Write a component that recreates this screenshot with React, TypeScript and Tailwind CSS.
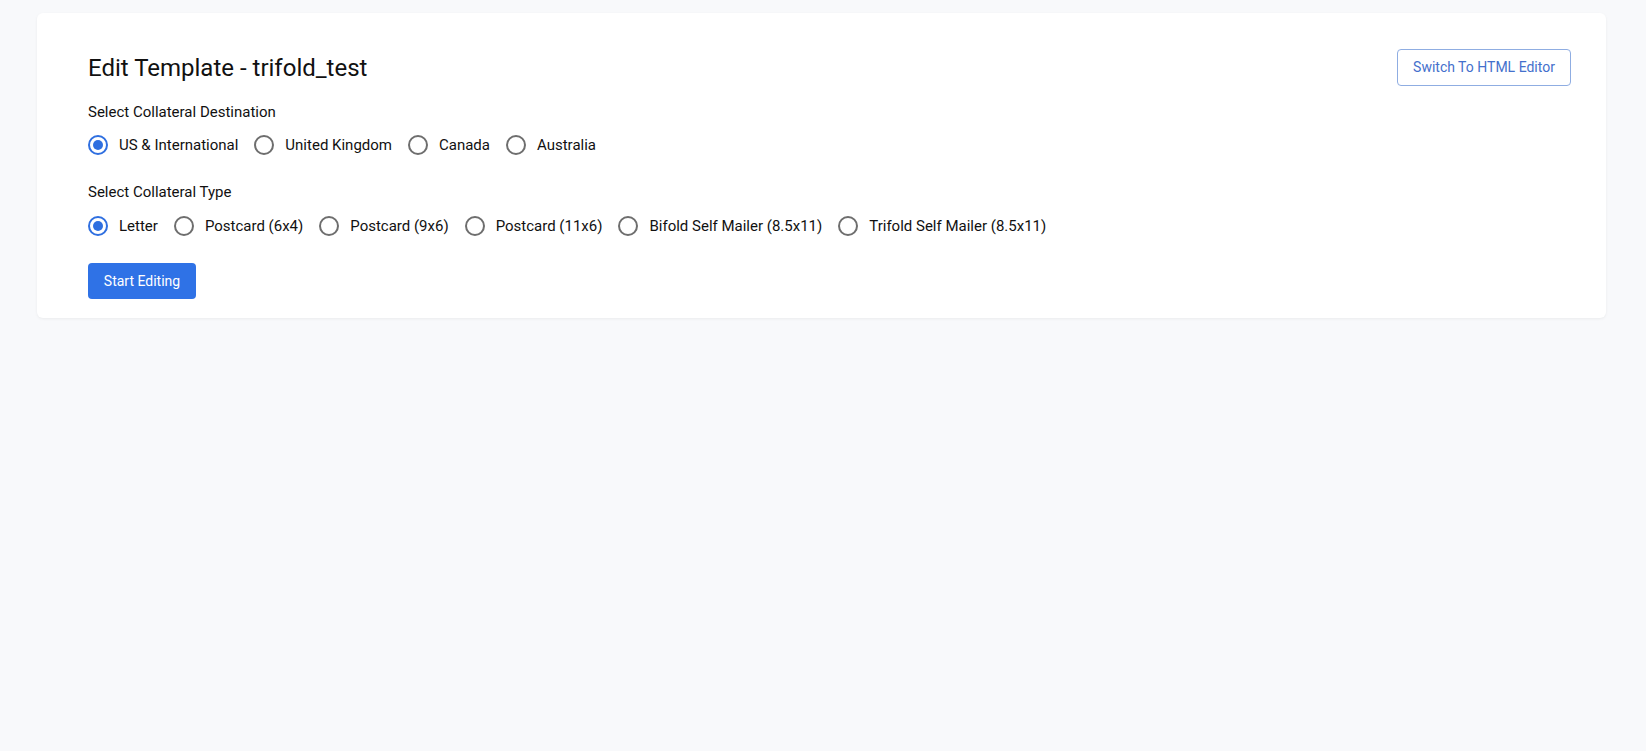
import { useState } from "react";

const destinations = ["US & International", "United Kingdom", "Canada", "Australia"];

const collateralTypes = [
  "Letter",
  "Postcard (6x4)",
  "Postcard (9x6)",
  "Postcard (11x6)",
  "Bifold Self Mailer (8.5x11)",
  "Trifold Self Mailer (8.5x11)",
];

function Radio({
  label,
  checked,
  onSelect,
}: {
  label: string;
  checked: boolean;
  onSelect: () => void;
}) {
  return (
    <label className="flex items-center gap-[11px] cursor-pointer" onClick={onSelect}>
      <span
        className={
          checked
            ? "flex h-5 w-5 items-center justify-center rounded-full border-2 border-[#2f6fe0]"
            : "flex h-5 w-5 items-center justify-center rounded-full border-2 border-[#6e6e6e]"
        }
      >
        {checked && <span className="h-[10px] w-[10px] rounded-full bg-[#2f6fe0]" />}
      </span>
      <span className="text-[15px] leading-5 text-[#111]">{label}</span>
    </label>
  );
}

export default function App() {
  const [destination, setDestination] = useState(destinations[0]);
  const [type, setType] = useState(collateralTypes[0]);

  return (
    <div
      className="min-h-screen bg-[#f8f9fb] pl-[37px] pr-[40px] pt-[13px]"
      style={{ fontFamily: "Roboto, 'Liberation Sans', sans-serif" }}
    >
      <div className="rounded-md bg-white pl-[51px] pr-[35px] pt-[36px] pb-[19px] shadow-[0_1px_3px_rgba(0,0,0,0.06)]">
        <div className="flex h-[37px] items-center justify-between">
          <h1 className="text-[24px] font-normal text-[#111]">Edit Template - trifold_test</h1>
          <button className="h-[37px] w-[174px] rounded-[4px] border border-[#8fade2] bg-white text-[14px] text-[#4470cc]">
            Switch To HTML Editor
          </button>
        </div>

        <div className="mt-[16px] text-[15px] leading-5 text-[#111]">Select Collateral Destination</div>
        <div className="mt-[13px] flex items-center gap-[16px]">
          {destinations.map((d) => (
            <Radio key={d} label={d} checked={destination === d} onSelect={() => setDestination(d)} />
          ))}
        </div>

        <div className="mt-[27px] text-[15px] leading-5 text-[#111]">Select Collateral Type</div>
        <div className="mt-[14px] flex items-center gap-[16px]">
          {collateralTypes.map((t) => (
            <Radio key={t} label={t} checked={type === t} onSelect={() => setType(t)} />
          ))}
        </div>

        <button className="mt-[27px] h-[36px] w-[108px] rounded-[4px] bg-[#2f72e6] text-[14px] text-white">
          Start Editing
        </button>
      </div>
    </div>
  );
}
